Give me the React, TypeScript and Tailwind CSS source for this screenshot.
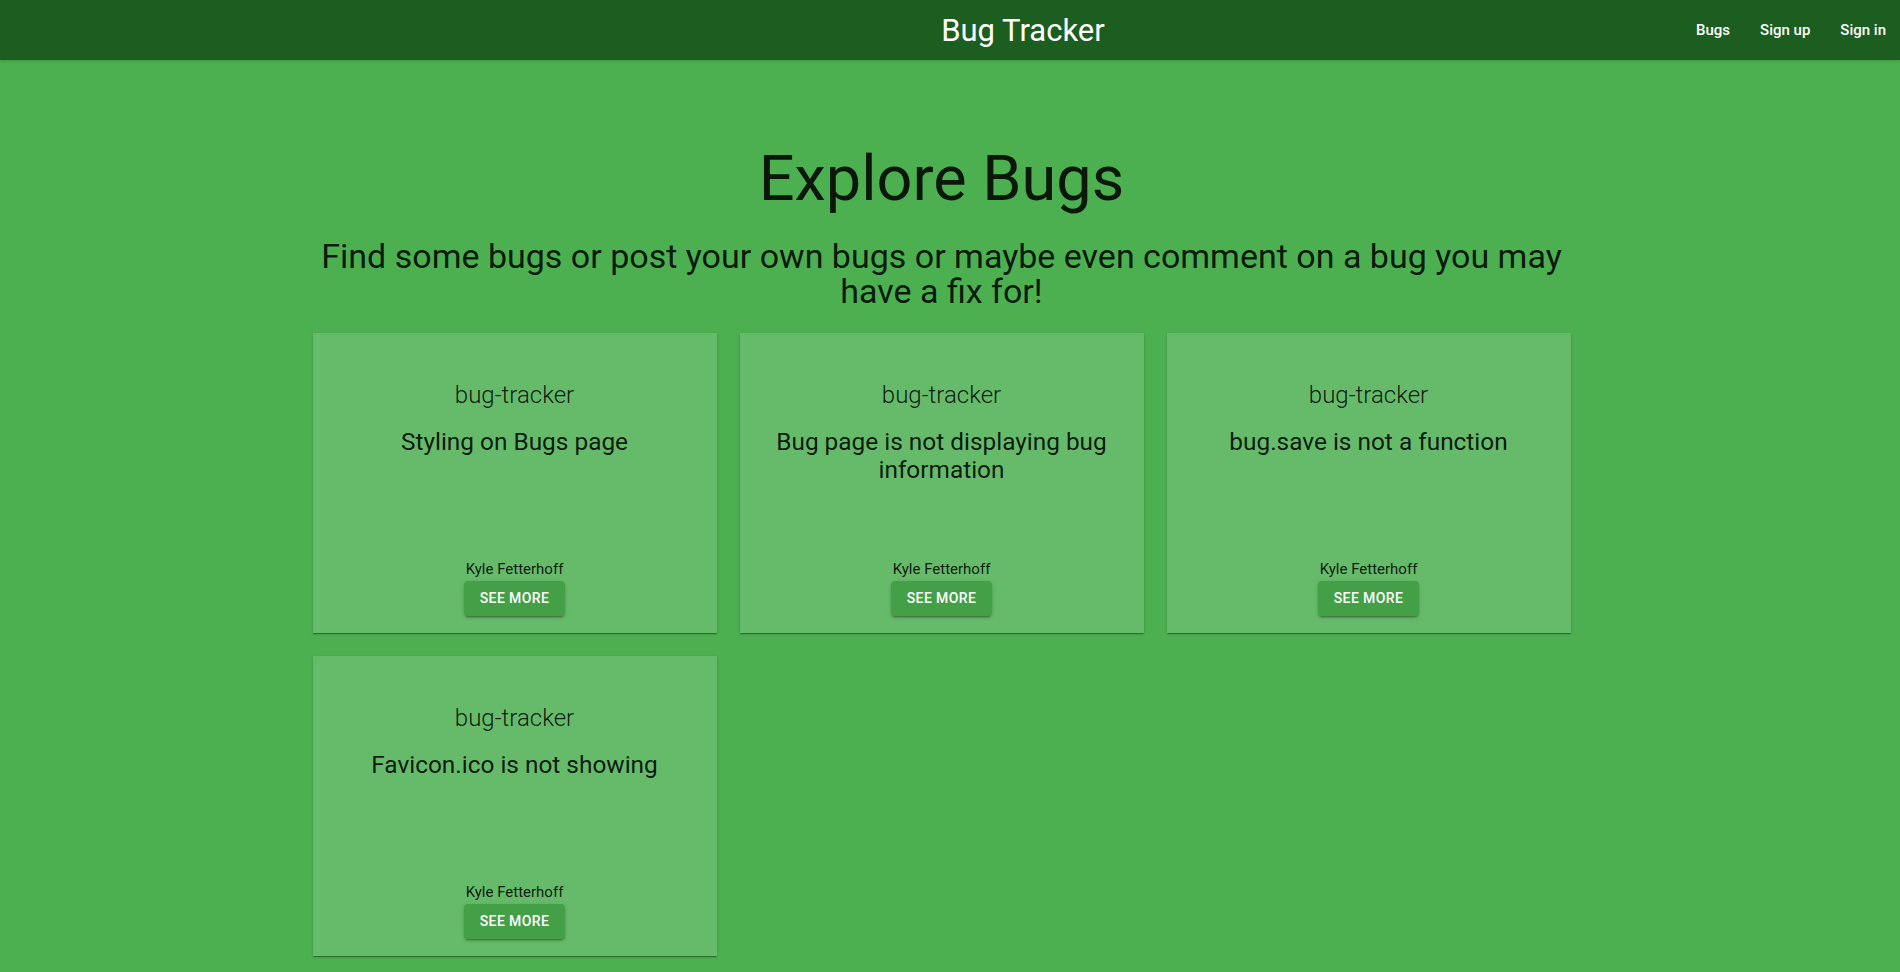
import React from 'react';

type Bug = {
  id: string;
  project: string;
  title: string;
  author: string;
};

const bugs: Bug[] = [
  { id: '1', project: 'bug-tracker', title: 'Styling on Bugs page', author: 'Kyle Fetterhoff' },
  { id: '2', project: 'bug-tracker', title: 'Bug page is not displaying bug information', author: 'Kyle Fetterhoff' },
  { id: '3', project: 'bug-tracker', title: 'bug.save is not a function', author: 'Kyle Fetterhoff' },
  { id: '4', project: 'bug-tracker', title: 'Favicon.ico is not showing', author: 'Kyle Fetterhoff' },
];

const navLinks = ['Bugs', 'Sign up', 'Sign in'];

const BugCard: React.FC<{ bug: Bug }> = ({ bug }) => (
  <div className="h-[300px] flex flex-col items-center text-center px-4 pt-[48px] pb-[17px] bg-[#66bb6a] shadow-[0_2px_1px_-1px_rgba(0,0,0,0.2),0_1px_1px_0_rgba(0,0,0,0.14),0_1px_3px_0_rgba(0,0,0,0.12)]">
    <div className="text-[24px] leading-[28px] font-light">{bug.project}</div>
    <div className="mt-[19px] text-[24.4px] leading-[28px]">{bug.title}</div>
    <div className="flex-1" />
    <div className="text-[15px] leading-[20px]">{bug.author}</div>
    <button className="mt-[2px] h-[35px] px-4 rounded bg-[#43a047] text-white text-[14px] font-medium tracking-[0.4px] uppercase shadow-[0_3px_1px_-2px_rgba(0,0,0,0.2),0_2px_2px_0_rgba(0,0,0,0.14),0_1px_5px_0_rgba(0,0,0,0.12)]">
      See more
    </button>
  </div>
);

const App: React.FC = () => {
  return (
    <div className="h-[972px] overflow-hidden bg-[#4caf50] text-black/[0.87] font-['Roboto','Liberation_Sans',sans-serif]">
      <header className="h-[60px] flex items-center bg-[#1b5e20] text-white shadow-[0_1px_3px_0_rgba(0,0,0,0.15)]">
        <div className="flex-1 text-center pl-[350px] text-[31px] leading-[35px]">Bug Tracker</div>
        <nav className="flex items-center gap-[30px] pr-[14px] text-[15px] leading-[20px] font-medium">
          {navLinks.map(link => (
            <a key={link} className="cursor-pointer">{link}</a>
          ))}
        </nav>
      </header>

      <main className="pr-[17px] pt-[83px]">
        <div className="w-[1258px] mx-auto">
          <h1 className="text-center text-[63px] leading-[72px] font-normal">Explore Bugs</h1>
          <p className="mt-[24px] text-center text-[34px] leading-[35px]">
            Find some bugs or post your own bugs or maybe even comment on a bug you may have a fix for!
          </p>
          <div className="mt-[24px] grid grid-cols-3 gap-[23px]">
            {bugs.map(bug => (
              <BugCard key={bug.id} bug={bug} />
            ))}
          </div>
        </div>
      </main>
    </div>
  );
};

export default App;
